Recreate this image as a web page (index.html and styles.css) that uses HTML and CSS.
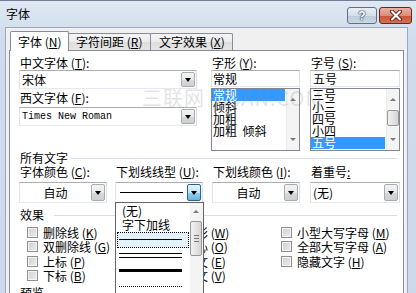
FILE: index.html
```html
<!DOCTYPE html>
<html lang="zh-CN">
<head>
    <meta charset="UTF-8">
    <meta name="viewport" content="width=device-width, initial-scale=1.0">
    <title>字体</title>
    <link rel="stylesheet" href="styles.css">
</head>
<body>
    <div class="window">
        <div class="titlebar">
            <span class="title">字体</span>
            <div class="caption-buttons">
                <span class="btn-help">?</span>
                <span class="btn-close">
                    <svg width="14" height="11" viewBox="0 0 14 11">
                        <path d="M3 1.5 L11 9.5 M11 1.5 L3 9.5" stroke="#6b2a1e" stroke-width="4" stroke-linecap="round"/>
                        <path d="M3 1.5 L11 9.5 M11 1.5 L3 9.5" stroke="#fff" stroke-width="2" stroke-linecap="round"/>
                    </svg>
                </span>
            </div>
        </div>

        <div class="client">
            <div class="tabs">
                <div class="tab active">字体 (<u>N</u>)</div>
                <div class="tab">字符间距 (<u>R</u>)</div>
                <div class="tab">文字效果 (<u>X</u>)</div>
            </div>

            <div class="panel">
                <div class="font-row">
                    <div class="col-main">
                        <div class="field-label">中文字体 (<u>T</u>):</div>
                        <div class="combo">
                            <span class="combo-text">宋体</span>
                            <span class="drop-btn"></span>
                        </div>
                        <div class="field-label second">西文字体 (<u>F</u>):</div>
                        <div class="combo second">
                            <span class="combo-text mono">Times New Roman</span>
                            <span class="drop-btn"></span>
                        </div>
                    </div>

                    <div class="col-style">
                        <div class="field-label">字形 (<u>Y</u>):</div>
                        <div class="textbox">常规</div>
                        <div class="listbox">
                            <ul>
                                <li class="selected">常规</li>
                                <li>倾斜</li>
                                <li>加粗</li>
                                <li>加粗&nbsp; 倾斜</li>
                            </ul>
                            <div class="vscroll">
                                <span class="arrow up"></span>
                                <span class="arrow down"></span>
                            </div>
                        </div>
                    </div>

                    <div class="col-size">
                        <div class="field-label">字号 (<u>S</u>):</div>
                        <div class="textbox">五号</div>
                        <div class="listbox">
                            <ul>
                                <li>三号</li>
                                <li>小三</li>
                                <li>四号</li>
                                <li>小四</li>
                                <li class="selected">五号</li>
                            </ul>
                            <div class="vscroll">
                                <span class="arrow up"></span>
                                <span class="thumb size-thumb"></span>
                                <span class="arrow down"></span>
                            </div>
                        </div>
                    </div>
                </div>

                <div class="group-title all-text">所有文字</div>

                <div class="color-row">
                    <div class="cell">
                        <div class="field-label">字体颜色 (<u>C</u>):</div>
                        <div class="combo tall">
                            <span class="combo-text center">自动</span>
                            <span class="drop-btn"></span>
                        </div>
                    </div>
                    <div class="cell">
                        <div class="field-label">下划线线型 (<u>U</u>):</div>
                        <div class="combo tall open">
                            <span class="combo-text"><span class="line single"></span></span>
                            <span class="drop-btn pressed"></span>
                            <div class="dropdown-list">
                                <div class="dd-item">(无)</div>
                                <div class="dd-item">字下加线</div>
                                <div class="dd-item line-item focused"><span class="line single"></span></div>
                                <div class="dd-item line-item"><span class="line double"></span></div>
                                <div class="dd-item line-item"><span class="line thick"></span></div>
                                <div class="dd-item line-item"><span class="line dotted"></span></div>
                                <div class="vscroll dd-scroll">
                                    <span class="arrow up"></span>
                                    <span class="thumb grip-thumb"></span>
                                </div>
                            </div>
                        </div>
                    </div>
                    <div class="cell">
                        <div class="field-label">下划线颜色 (<u>I</u>):</div>
                        <div class="combo tall">
                            <span class="combo-text center">自动</span>
                            <span class="drop-btn"></span>
                        </div>
                    </div>
                    <div class="cell last">
                        <div class="field-label">着重号<u>:</u></div>
                        <div class="combo tall">
                            <span class="combo-text">(无)</span>
                            <span class="drop-btn"></span>
                        </div>
                    </div>
                </div>

                <div class="group-title effects-title">效果</div>

                <div class="effects">
                    <div class="check"><span class="cb"></span>删除线 (<u>K</u>)</div>
                    <div class="check"><span class="cb"></span>阴影 (<u>W</u>)</div>
                    <div class="check"><span class="cb"></span>小型大写字母 (<u>M</u>)</div>
                    <div class="check"><span class="cb"></span>双删除线 (<u>G</u>)</div>
                    <div class="check"><span class="cb"></span>空心 (<u>O</u>)</div>
                    <div class="check"><span class="cb"></span>全部大写字母 (<u>A</u>)</div>
                    <div class="check"><span class="cb"></span>上标 (<u>P</u>)</div>
                    <div class="check"><span class="cb"></span>阳文 (<u>E</u>)</div>
                    <div class="check"><span class="cb"></span>隐藏文字 (<u>H</u>)</div>
                    <div class="check"><span class="cb"></span>下标 (<u>B</u>)</div>
                    <div class="check"><span class="cb"></span>阴文 (<u>V</u>)</div>
                </div>

                <div class="group-title preview-title">预览</div>
            </div>
        </div>

        <div class="watermark">三联网 3LIAN.COM</div>
    </div>
</body>
</html>
```

FILE: styles.css
```css
* {
    box-sizing: border-box;
}

body {
    margin: 0;
    font-family: "Noto Sans CJK SC", "Liberation Sans", sans-serif;
    font-size: 12px;
    color: #000;
}

u {
    text-decoration: underline;
    text-underline-offset: 1px;
}

.window {
    position: relative;
    width: 416px;
    height: 293px;
    overflow: hidden;
    background: linear-gradient(#dfe8f3, #cfdcec 40px, #cbd9ea);
    border-top: 1px solid #6f8096;
}

/* title bar */
.titlebar {
    height: 26px;
    display: flex;
    justify-content: space-between;
    align-items: flex-start;
}

.title {
    padding: 6px 0 0 6px;
    line-height: 14px;
}

.caption-buttons {
    display: flex;
    gap: 2px;
    margin: 6px 4px 0 0;
}

.btn-help,
.btn-close {
    height: 17px;
    border: 1px solid #5e6f86;
    border-radius: 3px;
    display: flex;
    align-items: center;
    justify-content: center;
}

.btn-help {
    width: 30px;
    background: linear-gradient(#e9eff6, #d3dfec 50%, #bccbdc 51%, #c9d7e6);
    color: #fff;
    font-family: "Liberation Sans", sans-serif;
    font-weight: bold;
    font-size: 12px;
    text-shadow: 0 0 1px #2d3e55, 0 0 1px #2d3e55, 0 0 2px #2d3e55;
}

.btn-close {
    width: 33px;
    border-color: #6a2418;
    background: linear-gradient(#eab2a4, #dc8c78 50%, #c8543b 51%, #d66f50);
}

/* client area */
.client {
    margin: 0 8px 0 5px;
    height: 267px;
    border: 1px solid #98a9bf;
    border-bottom: none;
    background: #f0f0f0;
    padding: 3px 3px 0 3px;
}

.tabs {
    position: relative;
    z-index: 1;
    display: flex;
    align-items: flex-end;
    height: 20px;
    margin: 0 0 -1px 1px;
}

.tab {
    height: 17px;
    margin-bottom: 1px;
    border: 1px solid #898c95;
    border-bottom: none;
    border-radius: 2px 2px 0 0;
    background: linear-gradient(#f5f5f5, #ebebeb 50%, #dddddd 51%, #e6e6e6);
    line-height: 15px;
    white-space: nowrap;
    padding-left: 7px;
}

.tab:nth-child(1) { width: 59px; }
.tab:nth-child(2) { width: 83px; margin-left: -1px; }
.tab:nth-child(3) { width: 83px; margin-left: -1px; padding-left: 8px; }

.tab.active {
    height: 20px;
    margin-bottom: 0;
    background: #fff;
    line-height: 19px;
    z-index: 2;
}

.panel {
    height: 250px;
    border: 1px solid #898c95;
    background: #fff;
    padding: 5px 0 0 9px;
}

.field-label {
    line-height: 14px;
    height: 14px;
    padding-left: 1px;
    white-space: nowrap;
}

/* first block: font / style / size */
.font-row {
    display: flex;
    height: 95px;
}

.col-main { width: 178px; }
.col-style { width: 89px; margin-left: 14px; }
.col-size { width: 90px; margin-left: 10px; }

.field-label.second { margin-top: 2px; }

.combo {
    position: relative;
    height: 19px;
    border: 1px solid #abadb3;
    border-color: #abadb3 #dbdfe6 #e3e9ef #e2e3ea;
    background: #fff;
    display: flex;
    align-items: center;
}

.combo.second { margin-top: 2px; }

.combo.tall {
    height: 21px;
    margin-top: 3px;
}

.combo-text {
    flex: 1;
    padding-left: 2px;
    line-height: 15px;
    white-space: nowrap;
}

.combo-text.center {
    text-align: center;
    padding-right: 2px;
}

.combo-text.mono {
    font-family: "Liberation Mono", monospace;
    font-size: 10px;
}

.drop-btn {
    position: relative;
    width: 14px;
    height: calc(100% - 2px);
    margin-right: 1px;
    border: 1px solid #a7abb2;
    border-radius: 2px;
    background: linear-gradient(#f3f3f3, #e9e9e9 50%, #d9d9d9 51%, #cfcfcf);
}

.drop-btn::after {
    content: "";
    position: absolute;
    left: 50%;
    top: 50%;
    margin: -2px 0 0 -3.5px;
    border-left: 3.5px solid transparent;
    border-right: 3.5px solid transparent;
    border-top: 4px solid #000;
}

.drop-btn.pressed {
    border-color: #2c628b;
    background: linear-gradient(#e5f4fc, #c4e5f6 50%, #98d1ef 51%, #68b3db);
}

.textbox {
    height: 17px;
    border: 1px solid #abadb3;
    border-color: #abadb3 #dbdfe6 #e3e9ef #e2e3ea;
    padding-left: 1px;
    line-height: 15px;
}

.col-size .textbox { padding-left: 2px; }

.listbox {
    position: relative;
    height: 63px;
    margin-top: 1px;
    border: 1px solid #828790;
    overflow: hidden;
}

.listbox ul {
    list-style: none;
    margin: 0;
    padding: 0 14px 0 0;
}

.listbox li {
    height: 12px;
    line-height: 12px;
    padding-left: 1px;
    white-space: nowrap;
}

.listbox li.selected {
    background: #3399ff;
    color: #fff;
}

/* scrollbars */
.vscroll {
    position: absolute;
    top: 0;
    right: 0;
    width: 13px;
    height: 100%;
    background: #f4f4f4;
    border-left: 1px solid #ececec;
}

.arrow {
    position: absolute;
    left: 3px;
    border-left: 3px solid transparent;
    border-right: 3px solid transparent;
}

.arrow.up {
    top: 9px;
    border-bottom: 3px solid #7a7a7a;
}

.arrow.down {
    bottom: 9px;
    border-top: 3px solid #7a7a7a;
}

.thumb {
    position: absolute;
    left: 0;
    width: 12px;
    border: 1px solid #979797;
    border-radius: 2px;
    background: linear-gradient(90deg, #f2f2f2, #e4e4e4 50%, #d4d4d4);
}

.size-thumb {
    top: 21px;
    height: 16px;
}

/* group headers */
.group-title {
    display: flex;
    align-items: center;
    width: 378px;
    line-height: 12px;
    height: 12px;
    padding-left: 1px;
}

.group-title::after {
    content: "";
    flex: 1;
    margin-left: 3px;
    border-top: 1px solid #d5dfe5;
}

.all-text { margin-top: 1px; }
.effects-title { margin-top: 6px; }
.effects-title::after { margin-left: 10px; }
.preview-title { margin-top: 4px; }

/* colour / underline row */
.color-row {
    display: flex;
    margin-top: 1px;
}

.cell { width: 88px; }
.cell:nth-child(2) { margin-left: 8px; }
.cell:nth-child(3) { margin-left: 9px; }
.cell.last { width: 90px; margin-left: 10px; }

.line {
    display: block;
    width: 63px;
}

.line.single { border-top: 1px solid #000; }

.line.double {
    height: 5px;
    border-top: 1px solid #000;
    border-bottom: 1px solid #000;
}

.line.thick { border-top: 3px solid #000; }

.line.dotted { border-top: 1px dotted #000; }

.combo.open .combo-text { padding-left: 4px; }

.dropdown-list {
    position: absolute;
    z-index: 5;
    top: 100%;
    left: -1px;
    width: 89px;
    height: 100px;
    background: #fff;
    border: 1px solid #646464;
    padding-top: 1px;
}

.dd-item {
    height: 14px;
    line-height: 14px;
    padding-left: 6px;
    margin-right: 14px;
}

.dd-item.line-item {
    height: 15.5px;
    padding-left: 3px;
    display: flex;
    align-items: center;
}

.dd-item.focused {
    margin-left: 1px;
    padding-left: 2px;
    outline: 1px dotted #000;
    outline-offset: -1px;
    background: #e3f1fb;
}

.dd-scroll {
    border-left: none;
}

.dd-scroll .arrow.up { top: 7px; }

.grip-thumb {
    top: 18px;
    height: 35px;
}

.grip-thumb::after {
    content: "";
    position: absolute;
    left: 3px;
    top: 13px;
    width: 5px;
    height: 5px;
    border-top: 1px solid #777;
    border-bottom: 1px solid #777;
    background: linear-gradient(#777, #777) center / 100% 1px no-repeat;
}

/* effect checkboxes */
.effects {
    display: grid;
    grid-template-columns: 141px 113px auto;
    margin: 4px 0 0 8px;
}

.check {
    display: flex;
    align-items: center;
    height: 14.5px;
    white-space: nowrap;
}

.cb {
    width: 11px;
    height: 11px;
    margin-right: 5px;
    border: 1px solid #8f8f8f;
    background: linear-gradient(135deg, #cfcfcf, #ededed);
    box-shadow: inset 0 0 0 1px #f4f4f4;
}

.watermark {
    position: absolute;
    left: 142px;
    top: 86px;
    font-size: 20px;
    line-height: 22px;
    letter-spacing: 1px;
    color: rgba(140, 140, 140, 0.25);
    white-space: nowrap;
    pointer-events: none;
}
```
